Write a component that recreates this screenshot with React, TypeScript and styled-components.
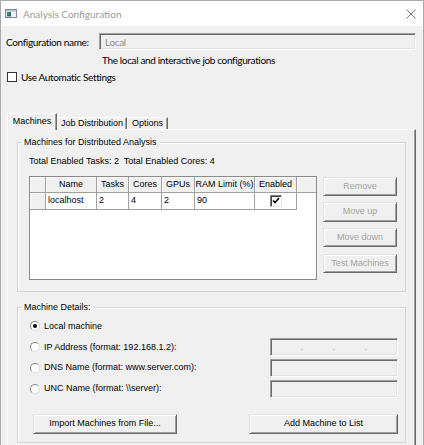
import React from "react";
import styled, { createGlobalStyle } from "styled-components";

const GlobalStyle = createGlobalStyle`
  html, body { margin: 0; padding: 0; background: #f0f0f0; }
  *, *::before, *::after { box-sizing: border-box; }
`;

const sans = `"Liberation Sans", Arial, sans-serif`;
const ui = `Lato, "Liberation Sans", sans-serif`;

const Window = styled.div`
  width: 424px;
  height: 445px;
  overflow: hidden;
  border: 1px solid #ababab;
  border-bottom: none;
  background: #f0f0f0;
  display: flex;
  flex-direction: column;
`;

const TitleBar = styled.div`
  flex: 0 0 25px;
  background: #fff;
  display: flex;
  align-items: center;
  padding: 0 7px 0 4px;
  font: 10px/12px ${ui};
  color: #999;
`;

const TitleText = styled.span`
  margin-left: 6px;
  flex: 1;
`;

const Body = styled.div`
  flex: 1;
  display: flex;
  flex-direction: column;
  font: 10px/12px ${ui};
  letter-spacing: -0.35px;
  color: #000;
`;

const ConfigRow = styled.div`
  margin: 7px 0 0 5px;
  display: flex;
  align-items: center;
  height: 17px;
`;

const ConfigLabel = styled.span`
  width: 93px;
  flex: 0 0 93px;
`;

const sunken = `
  border: 1px solid;
  border-color: #a0a0a0 #ffffff #ffffff #a0a0a0;
  box-shadow: inset 1px 1px 0 #696969, inset -1px -1px 0 #e3e3e3;
`;

const NameInput = styled.div`
  width: 317px;
  height: 17px;
  ${sunken}
  background: #f0f0f0;
  color: #8d8d8d;
  padding-left: 5px;
  display: flex;
  align-items: center;
`;

const Description = styled.div`
  margin: 4px 0 0 101px;
`;

const CheckRow = styled.label`
  margin: 5px 0 0 6px;
  height: 12px;
  display: flex;
  align-items: center;
  gap: 4px;
`;

const PlainCheck = styled.span`
  width: 10px;
  height: 10px;
  border: 1px solid #333;
  background: #fff;
`;

const TabArea = styled.div`
  margin: 30px 0 0 6px;
  width: 409px;
  flex: 1;
  display: flex;
  flex-direction: column;
  font: 9px/11px ${sans};
  letter-spacing: normal;
`;

const TabStrip = styled.div`
  display: flex;
  align-items: flex-end;
  height: 17px;
  margin-bottom: -1px;
  position: relative;
  z-index: 1;
`;

const Tab = styled.div<{ $w: number; $active?: boolean }>`
  width: ${(p) => p.$w}px;
  height: ${(p) => (p.$active ? 17 : 12)}px;
  margin-bottom: ${(p) => (p.$active ? 0 : 1)}px;
  padding-bottom: ${(p) => (p.$active ? 2 : 0)}px;
  background: #f0f0f0;
  border-top: 1px solid #fff;
  border-left: 1px solid #fff;
  border-right: 1px solid #696969;
  box-shadow: inset -1px 0 0 #a0a0a0;
  display: flex;
  align-items: center;
  justify-content: center;
  white-space: nowrap;
`;

const Panel = styled.div`
  flex: 1;
  border-top: 1px solid #fff;
  border-left: 1px solid #fff;
  border-right: 1px solid #696969;
  box-shadow: inset -1px 0 0 #a0a0a0;
  padding: 7px 9px 0 9px;
  display: flex;
  flex-direction: column;
`;

const Group = styled.fieldset<{ $gap?: number }>`
  margin: ${(p) => p.$gap ?? 0}px 0 0 0;
  padding: 0;
  min-width: 0;
  border: 1px solid #d5d5d5;
  box-shadow: inset 1px 1px 0 #fff;
`;

const Legend = styled.legend`
  margin-left: 3px;
  padding: 0 3px;
  font: 9px/11px ${sans};
`;

const GroupInner = styled.div<{ $pt: number; $pb: number; $pl: number }>`
  padding: ${(p) => p.$pt}px 7px ${(p) => p.$pb}px ${(p) => p.$pl}px;
`;

const Totals = styled.div`
  margin-top: 8px;
  white-space: nowrap;
`;

const MachinesRow = styled.div`
  margin-top: 8.5px;
  display: flex;
  gap: 6px;
`;

const Grid = styled.div`
  width: 288px;
  height: 104px;
  border: 1px solid #8a8a8a;
  background: #fff;
  display: grid;
  grid-template-columns: 16px 51px 32px 33px 33px 60px 42px 1fr;
  grid-template-rows: 16px 17px;
  align-content: start;
`;

const HeadCell = styled.div<{ $last?: boolean }>`
  background: #f0f0f0;
  border-right: ${(p) => (p.$last ? "none" : "1px solid #a0a0a0")};
  border-bottom: 1px solid #a0a0a0;
  box-shadow: inset 1px 1px 0 #fff;
  display: flex;
  align-items: center;
  justify-content: center;
  white-space: nowrap;
  overflow: visible;
`;

const Cell = styled.div`
  border-right: 1px solid #a0a0a0;
  border-bottom: 1px solid #a0a0a0;
  padding-left: 2px;
  display: flex;
  align-items: center;
  white-space: nowrap;
`;

const CenterCell = styled(Cell)`
  padding-left: 0;
  justify-content: center;
`;

const GridCheck = styled.span`
  width: 12px;
  height: 12px;
  border: 1px solid;
  border-color: #808080 #e3e3e3 #e3e3e3 #808080;
  box-shadow: inset 1px 1px 0 #404040;
  background: #fff;
  display: flex;
  align-items: center;
  justify-content: center;
`;

const ButtonColumn = styled.div`
  width: 74px;
  padding-top: 1px;
  display: flex;
  flex-direction: column;
  gap: 6.2px;
`;

const Button = styled.button<{ $w?: number; $disabledLook?: boolean }>`
  width: ${(p) => (p.$w ? `${p.$w}px` : "100%")};
  height: 19.5px;
  padding: 0;
  background: #f0f0f0;
  border: 1px solid;
  border-color: #e3e3e3 #696969 #696969 #e3e3e3;
  box-shadow: inset 1px 1px 0 #fff, inset -1px -1px 0 #a0a0a0;
  font: 9px/11px ${sans};
  color: ${(p) => (p.$disabledLook ? "#a3a3a3" : "#000")};
  white-space: nowrap;
`;

const OptionRow = styled.div`
  height: 20.8px;
  display: flex;
  align-items: center;
  justify-content: space-between;
`;

const RadioLabel = styled.label`
  display: flex;
  align-items: center;
  gap: 4px;
  white-space: nowrap;
`;

const Radio = styled.span<{ $checked?: boolean }>`
  width: 10px;
  height: 10px;
  border-radius: 50%;
  border: 1px solid;
  border-color: #8a8a8a #dcdcdc #dcdcdc #8a8a8a;
  background: #fff;
  display: flex;
  align-items: center;
  justify-content: center;
  &::after {
    content: "";
    width: 4px;
    height: 4px;
    border-radius: 50%;
    background: ${(p) => (p.$checked ? "#000" : "transparent")};
  }
`;

const FieldInput = styled.div`
  width: 128px;
  height: 18.4px;
  ${sunken}
  background: #f0f0f0;
  display: flex;
  align-items: center;
  justify-content: space-evenly;
  color: #a0a0a0;
`;

const BottomButtons = styled.div`
  margin: 15px 0 0 3px;
  display: flex;
  justify-content: space-between;
`;

const AppIcon = () => (
  <svg width="12" height="9" viewBox="0 0 12 9">
    <rect x="0.5" y="0.5" width="11" height="8" fill="#eef2f6" stroke="#7d8b99" />
    <rect x="1" y="1" width="10" height="1.5" fill="#b8c4cf" />
    <rect x="2" y="3" width="4" height="4.5" fill="#2f6d78" />
    <rect x="2.5" y="3.5" width="1.5" height="2" fill="#4caf50" />
  </svg>
);

const CloseIcon = () => (
  <svg width="10" height="10" viewBox="0 0 10 10">
    <path d="M0.5 0.5 L9.5 9.5 M9.5 0.5 L0.5 9.5" stroke="#7a7a7a" strokeWidth="1" />
  </svg>
);

const CheckMark = () => (
  <svg width="8" height="7" viewBox="0 0 8 7">
    <path d="M1 3.5 L3 5.5 L7 1" stroke="#000" strokeWidth="1.6" fill="none" />
  </svg>
);

const headers = ["Name", "Tasks", "Cores", "GPUs", "RAM Limit (%)", "Enabled"];

export default function App() {
  return (
    <>
      <GlobalStyle />
      <Window>
        <TitleBar>
          <AppIcon />
          <TitleText>Analysis Configuration</TitleText>
          <CloseIcon />
        </TitleBar>
        <Body>
          <ConfigRow>
            <ConfigLabel>Configuration name:</ConfigLabel>
            <NameInput>Local</NameInput>
          </ConfigRow>
          <Description>The local and interactive job configurations</Description>
          <CheckRow>
            <PlainCheck />
            <span>Use Automatic Settings</span>
          </CheckRow>
          <TabArea>
            <TabStrip>
              <Tab $w={50} $active>Machines</Tab>
              <Tab $w={70}>Job Distribution</Tab>
              <Tab $w={41}>Options</Tab>
            </TabStrip>
            <Panel>
              <Group>
                <Legend>Machines for Distributed Analysis</Legend>
                <GroupInner $pt={0} $pb={11.5} $pl={11}>
                  <Totals>Total Enabled Tasks: 2&nbsp; Total Enabled Cores: 4</Totals>
                  <MachinesRow>
                    <Grid>
                      <HeadCell />
                      {headers.map((h) => (
                        <HeadCell key={h}>{h}</HeadCell>
                      ))}
                      <HeadCell $last />
                      <HeadCell />
                      <Cell>localhost</Cell>
                      <Cell>2</Cell>
                      <Cell>4</Cell>
                      <Cell>2</Cell>
                      <Cell>90</Cell>
                      <CenterCell>
                        <GridCheck>
                          <CheckMark />
                        </GridCheck>
                      </CenterCell>
                      <div />
                    </Grid>
                    <ButtonColumn>
                      <Button $disabledLook>Remove</Button>
                      <Button $disabledLook>Move up</Button>
                      <Button $disabledLook>Move down</Button>
                      <Button $disabledLook>Test Machines</Button>
                    </ButtonColumn>
                  </MachinesRow>
                </GroupInner>
              </Group>
              <Group $gap={10}>
                <Legend>Machine Details:</Legend>
                <GroupInner $pt={3} $pb={8} $pl={12}>
                  <OptionRow>
                    <RadioLabel>
                      <Radio $checked />
                      Local machine
                    </RadioLabel>
                  </OptionRow>
                  <OptionRow>
                    <RadioLabel>
                      <Radio />
                      IP Address (format: 192.168.1.2):
                    </RadioLabel>
                    <FieldInput>
                      <span>.</span>
                      <span>.</span>
                      <span>.</span>
                    </FieldInput>
                  </OptionRow>
                  <OptionRow>
                    <RadioLabel>
                      <Radio />
                      DNS Name (format: www.server.com):
                    </RadioLabel>
                    <FieldInput />
                  </OptionRow>
                  <OptionRow>
                    <RadioLabel>
                      <Radio />
                      UNC Name (format: \\server):
                    </RadioLabel>
                    <FieldInput />
                  </OptionRow>
                  <BottomButtons>
                    <Button $w={144}>Import Machines from File...</Button>
                    <Button $w={149}>Add Machine to List</Button>
                  </BottomButtons>
                </GroupInner>
              </Group>
            </Panel>
          </TabArea>
        </Body>
      </Window>
    </>
  );
}
